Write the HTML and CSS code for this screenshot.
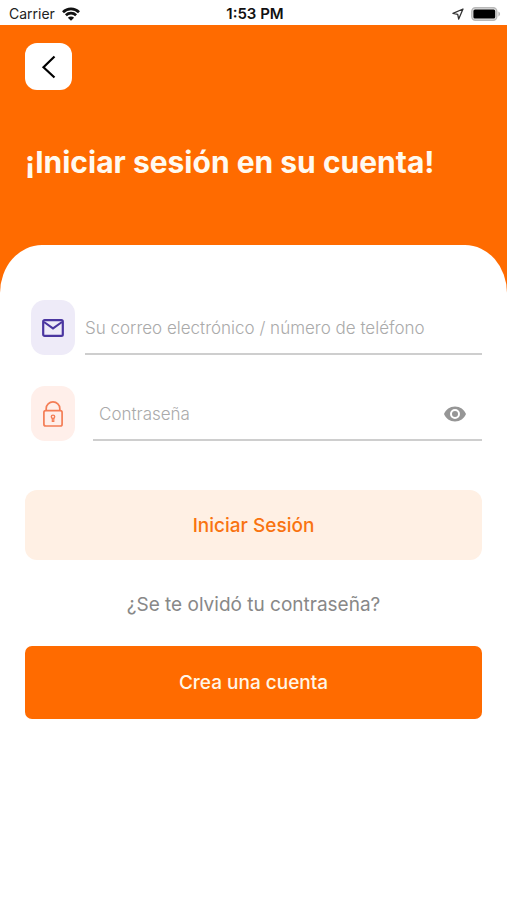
FILE: index.html
```html
<!DOCTYPE html>
<html lang="es">
<head>
<meta charset="utf-8">
<meta name="viewport" content="width=device-width, initial-scale=1">
<title>Iniciar sesión</title>
<link rel="stylesheet" href="styles.css">
</head>
<body>
<div class="status">
  <div class="status-left">
    <span>Carrier</span>
    <svg width="18" height="14" viewBox="0 0 18 14" aria-hidden="true">
      <path d="M1 5.200a11.400 11.400 0 0 1 16 0M3.900 8.300a7.300 7.300 0 0 1 10.200 0" fill="none" stroke="#111" stroke-width="2.700"/>
      <path d="M9 13.800 5.900 10.700a4.400 4.400 0 0 1 6.200 0z" fill="#111"/>
    </svg>
  </div>
  <span class="time">1:53 PM</span>
  <div class="status-right">
    <svg width="12" height="12" viewBox="0 0 12 12" aria-hidden="true">
      <path d="M11 1 1 5.400l4.700 1 1 4.600z" fill="none" stroke="#333" stroke-width="1.300" stroke-linejoin="round"/>
    </svg>
    <svg width="30" height="14" viewBox="0 0 30 14" aria-hidden="true">
      <rect x=".8" y=".8" width="25" height="12.400" rx="3.600" fill="#e4e4e4" stroke="#b8b8b8" stroke-width="1.400"/>
      <rect x="2.400" y="2.400" width="21.800" height="9.200" rx="1.600" fill="#000"/>
      <path d="M27.400 4.600c2.200.7 2.200 4.100 0 4.800z" fill="#b5b5b5"/>
    </svg>
  </div>
</div>
<main class="screen">
  <header class="hero">
    <button class="back" type="button" aria-label="Volver">
      <svg width="24" height="24" viewBox="0 0 24 24" aria-hidden="true">
        <path d="M17.500 1.500 6.500 12.200l11 10.300" fill="none" stroke="#000" stroke-width="2.200"/>
      </svg>
    </button>
    <h1>¡Iniciar sesión en su cuenta!</h1>
  </header>
  <form class="sheet">
    <div class="field">
      <label class="tile tile-mail" for="user" aria-label="Correo electrónico o teléfono">
        <svg width="22" height="18" viewBox="0 0 22 18" aria-hidden="true">
          <rect x="1.200" y="1.200" width="19.600" height="15.600" rx="1.400" fill="none" stroke="#4a36a0" stroke-width="2.200"/>
          <path d="M2 3 11 9.400 20 3" fill="none" stroke="#4a36a0" stroke-width="2"/>
        </svg>
      </label>
      <div class="line">
        <input id="user" type="text" placeholder="Su correo electrónico / número de teléfono">
      </div>
    </div>
    <div class="field field-password">
      <label class="tile tile-lock" for="password" aria-label="Contraseña">
        <svg width="20" height="26" viewBox="0 0 20 26" aria-hidden="true">
          <g fill="none" stroke="#f47d55" stroke-width="1.700">
            <rect x=".9" y="9.600" width="18.200" height="15.400" rx="1.800"/>
            <path d="M3.200 9.600V7.400a6.800 6.500 0 0 1 13.600 0v2.200"/>
            <circle cx="10" cy="15.800" r="1.700" stroke-width="1.400"/>
            <path d="M9.300 17.300v3h1.500v-3" stroke-width="1.200"/>
          </g>
        </svg>
      </label>
      <div class="line">
        <input id="password" type="password" placeholder="Contraseña">
        <button class="eye" type="button" aria-label="Mostrar contraseña">
          <svg width="22" height="16" viewBox="0 0 22 16" aria-hidden="true">
            <path fill-rule="evenodd" fill="#969696" d="M11 .5C6 .5 1.700 3.600 0 8c1.700 4.400 6 7.500 11 7.500S20.300 12.400 22 8C20.300 3.600 16 .5 11 .5zM11 13a5 5 0 1 1 0-10 5 5 0 0 1 0 10zM11 5a3 3 0 1 0 0 6 3 3 0 0 0 0-6z"/>
          </svg>
        </button>
      </div>
    </div>
    <button class="login" type="submit">Iniciar Sesión</button>
    <a class="forgot" href="#">¿Se te olvidó tu contraseña?</a>
    <button class="create" type="button">Crea una cuenta</button>
  </form>
</main>
</body>
</html>
```
FILE: styles.css
```css
* {
  box-sizing: border-box;
}

body {
  margin: 0;
  min-height: 100vh;
  background: #fff;
  font-family: Inter, "Liberation Sans", sans-serif;
}

button,
input {
  border: 0;
  padding: 0;
  font-family: inherit;
}

button {
  cursor: pointer;
}

svg {
  display: block;
}

.status {
  display: grid;
  grid-template-columns: 1fr auto 1fr;
  align-items: center;
  height: 25px;
  padding: 2px 6px 0 9px;
  font-size: 14px;
  color: #222;
}

.status-left,
.status-right {
  display: flex;
  align-items: center;
  gap: 7px;
}

.status-right {
  justify-content: flex-end;
}

.time {
  font-size: 15px;
  font-weight: 600;
  color: #111;
}

.screen {
  background: linear-gradient(#ff6b00 320px, #fff 320px);
}

.hero {
  padding: 18px 25px 63px;
}

.back {
  display: flex;
  align-items: center;
  justify-content: center;
  width: 47px;
  height: 47px;
  border-radius: 12px;
  background: #fff;
}

h1 {
  margin: 52px 0 0;
  font-size: 30px;
  line-height: 40px;
  font-weight: 700;
  color: #fffaf0;
  white-space: nowrap;
}

.sheet {
  display: flex;
  flex-direction: column;
  padding: 55px 25px 40px;
  border-radius: 42px 42px 0 0 / 48px 48px 0 0;
  background: #fff;
}

.field {
  display: flex;
  gap: 10px;
  margin-bottom: 31px;
  padding-left: 6px;
}

.field-password {
  gap: 18px;
  margin-bottom: 49px;
}

.tile {
  display: flex;
  align-items: center;
  justify-content: center;
  flex: none;
  width: 44px;
  height: 55px;
  border-radius: 14px;
}

.tile-mail {
  background: #eeebf8;
}

.tile-lock {
  background: #ffefea;
}

.line {
  display: flex;
  align-items: center;
  flex: 1;
  min-width: 0;
  padding-top: 2px;
  border-bottom: 2px solid #cecece;
}

.field-password .line {
  padding: 2px 16px 0 6px;
}

.line input {
  flex: 1;
  min-width: 0;
  height: 40px;
  outline: 0;
  background: none;
  font-size: 17px;
  font-weight: 300;
  color: #333;
}

.line input::placeholder {
  color: #aaa;
  opacity: 1;
}

.eye {
  background: none;
}

.login,
.create {
  font-size: 19px;
}

.login {
  height: 70px;
  border-radius: 12px;
  background: #fff0e4;
  font-weight: 500;
  color: #f97310;
}

.forgot {
  align-self: center;
  margin: 32px 0 29px;
  font-size: 19px;
  line-height: 25px;
  color: #888;
  text-decoration: none;
}

.create {
  height: 73px;
  border-radius: 7px;
  background: #ff6b00;
  font-weight: 500;
  color: #fff6e8;
}
```
